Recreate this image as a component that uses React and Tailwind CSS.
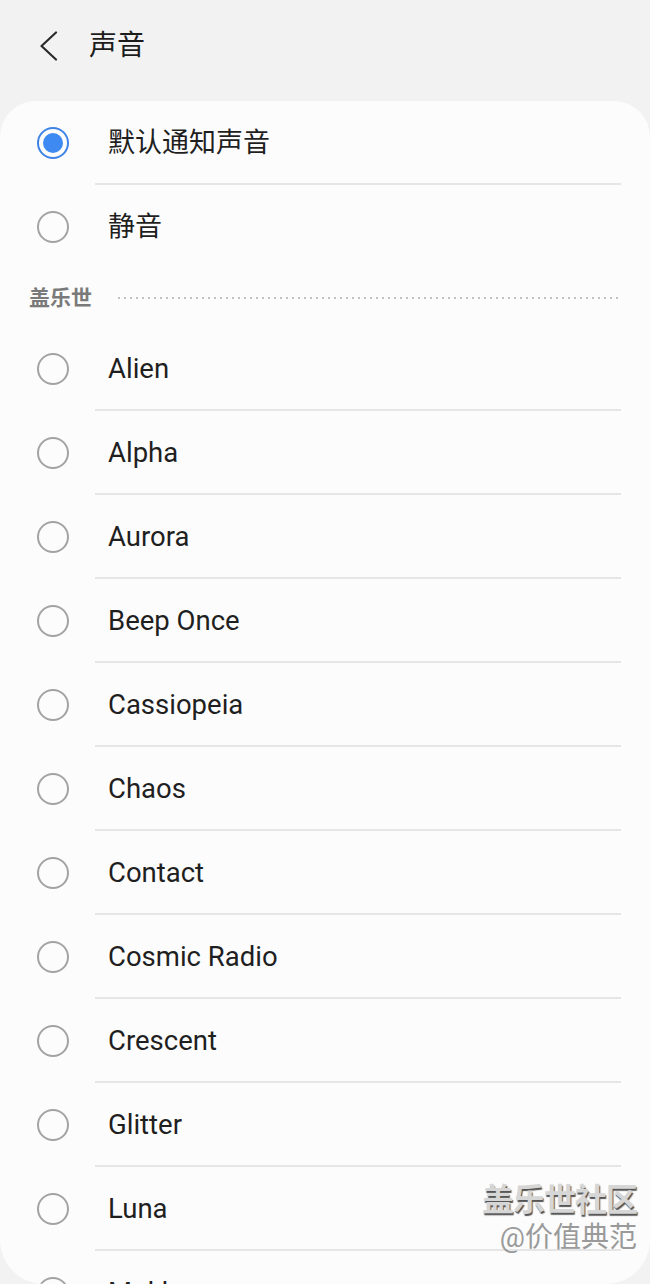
const SOUNDS = [
  'Alien',
  'Alpha',
  'Aurora',
  'Beep Once',
  'Cassiopeia',
  'Chaos',
  'Contact',
  'Cosmic Radio',
  'Crescent',
  'Glitter',
  'Luna',
  'Mokka',
]

const Radio = ({ checked }) =>
  checked ? (
    <span className="w-[32px] h-[32px] rounded-full border-[2px] border-[#3e84e6] flex items-center justify-center">
      <span className="w-[20px] h-[20px] rounded-full bg-[#3d8bf2]" />
    </span>
  ) : (
    <span className="w-[32px] h-[32px] rounded-full border-[2px] border-[#a3a3a3]" />
  )

const Row = ({ label, checked, cjk, divider = true }) => (
  <div className="relative h-[84px] flex items-center">
    <div className="w-[108px] pl-[37px] flex items-center">
      <Radio checked={checked} />
    </div>
    <span className={`${cjk ? 'text-[27px]' : 'text-[27.5px]'} text-[#1f1f1f] leading-none`}>{label}</span>
    {divider && <div className="absolute left-[95px] right-[29px] bottom-0 h-[2px] bg-[#e6e6e6]" />}
  </div>
)

export default function App() {
  return (
    <div
      className="w-[650px] h-[1284px] bg-[#f2f2f2] flex flex-col overflow-hidden relative"
      style={{ fontFamily: 'Roboto, "Noto Sans CJK SC", sans-serif' }}
    >
      <header className="h-[101px] shrink-0 flex items-start pt-[25px]">
        <div className="pl-[39px] w-[89px] h-[42px] flex items-center">
          <svg width="20" height="30" viewBox="0 0 20 30" fill="none">
            <polyline points="17,1.5 2.5,15 17,28.5" stroke="#2a2a2a" strokeWidth="2.2" strokeLinecap="round" strokeLinejoin="round" />
          </svg>
        </div>
        <h1 className="text-[28px] text-[#1c1c1c] h-[42px] flex items-center">声音</h1>
      </header>

      <main className="flex-1 bg-[#fcfcfc] rounded-[36px] rounded-b-[44px] overflow-hidden">
        <Row label="默认通知声音" checked cjk />
        <Row label="静音" cjk divider={false} />
        <div className="h-[58px] flex items-center pl-[29px] pr-[29px] gap-[26px]">
          <span className="text-[21px] font-bold text-[#7a7a7a] leading-none">盖乐世</span>
          <div className="flex-1 h-[2px] bg-[linear-gradient(to_right,#c2c2c2_2px,transparent_2px)] bg-[length:6px_2px]" />
        </div>
        {SOUNDS.map((s) => (
          <Row key={s} label={s} />
        ))}
      </main>

      <div className="absolute right-[13px] top-[1184px] flex flex-col items-end leading-none">
        <span className="text-[32px] font-bold tracking-[-1px] text-[#d6d6d6] [text-shadow:1px_2px_1px_#555]">
          盖乐世社区
        </span>
        <span className="text-[28px] mt-[8px] text-[#9a9a9a]">@价值典范</span>
      </div>
    </div>
  )
}
